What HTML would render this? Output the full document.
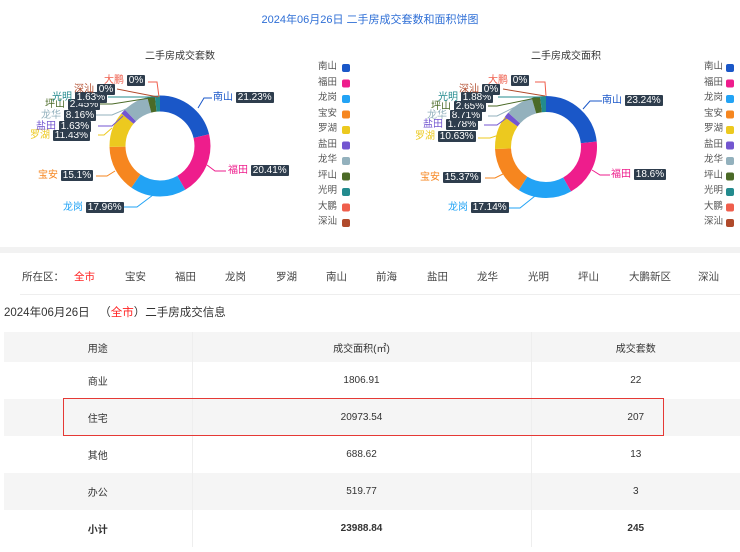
<!DOCTYPE html>
<html><head><meta charset="utf-8"><style>
*{margin:0;padding:0;box-sizing:border-box}
body{width:740px;height:552px;background:#fff;font-family:"Liberation Sans","Noto Sans CJK SC",sans-serif;position:relative;overflow:hidden;color:#333}
.a{position:absolute;white-space:nowrap}
.t{font-size:11px;color:#2f6fd6;left:0;width:740px;text-align:center;top:11px}
.ct{font-size:10px;color:#333}
.lb{font-size:10px;line-height:12px}
.bx{background:#2e3d4d;color:#fff;font-size:10px;line-height:12px;padding:0 2px;border-radius:1px}
.nav{font-size:10.5px;color:#444;top:269px}
table{position:absolute;left:4px;top:332px;width:736px;border-collapse:collapse;font-size:10px;color:#333}
td{height:37px;text-align:center;border-right:1px solid #eee}
td:last-child{border-right:none}
tr.g td{background:#f5f5f5}
</style></head><body>
<div class="a t">2024年06月26日 二手房成交套数和面积饼图</div>
<div class="a ct" style="left:145px;top:47px">二手房成交套数</div>
<div class="a ct" style="left:531px;top:47px">二手房成交面积</div>

<svg class="a" style="left:0;top:0" width="740" height="250">
<g transform="translate(160,146) rotate(-90)" fill="none" stroke-width="16">
<circle r="42.5" pathLength="100" stroke="#1a57c8" stroke-dasharray="21.23 100"/>
<circle r="42.5" pathLength="100" stroke="#ee1d8c" stroke-dasharray="20.41 100" stroke-dashoffset="-21.23"/>
<circle r="42.5" pathLength="100" stroke="#22a3f5" stroke-dasharray="17.96 100" stroke-dashoffset="-41.64"/>
<circle r="42.5" pathLength="100" stroke="#f6861f" stroke-dasharray="15.1 100" stroke-dashoffset="-59.6"/>
<circle r="42.5" pathLength="100" stroke="#ecc91f" stroke-dasharray="11.43 100" stroke-dashoffset="-74.7"/>
<circle r="42.5" pathLength="100" stroke="#7356d0" stroke-dasharray="1.63 100" stroke-dashoffset="-86.13"/>
<circle r="42.5" pathLength="100" stroke="#93b1bd" stroke-dasharray="8.16 100" stroke-dashoffset="-87.76"/>
<circle r="42.5" pathLength="100" stroke="#4b6a27" stroke-dasharray="2.45 100" stroke-dashoffset="-95.92"/>
<circle r="42.5" pathLength="100" stroke="#238b8e" stroke-dasharray="1.63 100" stroke-dashoffset="-98.37"/>
</g>
<g transform="translate(546,147) rotate(-90)" fill="none" stroke-width="16">
<circle r="43" pathLength="100" stroke="#1a57c8" stroke-dasharray="23.24 100"/>
<circle r="43" pathLength="100" stroke="#ee1d8c" stroke-dasharray="18.6 100" stroke-dashoffset="-23.24"/>
<circle r="43" pathLength="100" stroke="#22a3f5" stroke-dasharray="17.14 100" stroke-dashoffset="-41.84"/>
<circle r="43" pathLength="100" stroke="#f6861f" stroke-dasharray="15.37 100" stroke-dashoffset="-58.98"/>
<circle r="43" pathLength="100" stroke="#ecc91f" stroke-dasharray="10.63 100" stroke-dashoffset="-74.35"/>
<circle r="43" pathLength="100" stroke="#7356d0" stroke-dasharray="1.78 100" stroke-dashoffset="-84.98"/>
<circle r="43" pathLength="100" stroke="#93b1bd" stroke-dasharray="8.71 100" stroke-dashoffset="-86.76"/>
<circle r="43" pathLength="100" stroke="#4b6a27" stroke-dasharray="2.65 100" stroke-dashoffset="-95.47"/>
<circle r="43" pathLength="100" stroke="#238b8e" stroke-dasharray="1.88 100" stroke-dashoffset="-98.12"/>
</g>
<g fill="none" stroke-width="1">
<polyline points="198,108 204,98 212,98" stroke="#1a57c8"/>
<polyline points="207,165 215,171 226,171" stroke="#ee1d8c"/>
<polyline points="153,195 137,207 122,207" stroke="#22a3f5"/>
<polyline points="115,171 107,176 96,176" stroke="#f6861f"/>
<polyline points="112,128 104,135 98,135" stroke="#ecc91f"/>
<polyline points="123,116 112,126 98,126" stroke="#7356d0"/>
<polyline points="140,103 112,115 95,115" stroke="#93b1bd"/>
<polyline points="150,98 112,104 97,104" stroke="#4b6a27"/>
<polyline points="157,97 115,97 108,97" stroke="#238b8e"/>
<polyline points="158,97 117,89" stroke="#b04a2b"/>
<polyline points="159,97 157,82 148,82" stroke="#ef5e4c"/>
<polyline points="583,109 590,101 602,101" stroke="#1a57c8"/>
<polyline points="592,170 600,175 610,175" stroke="#ee1d8c"/>
<polyline points="535,196 520,208 490,208" stroke="#22a3f5"/>
<polyline points="505,173 495,178 485,178" stroke="#f6861f"/>
<polyline points="502,134 490,138 478,138" stroke="#ecc91f"/>
<polyline points="508,117 497,125 484,125" stroke="#7356d0"/>
<polyline points="523,103 497,116 488,116" stroke="#93b1bd"/>
<polyline points="536,98 497,106 488,106" stroke="#4b6a27"/>
<polyline points="543,97 498,97" stroke="#238b8e"/>
<polyline points="545,96 503,89" stroke="#b04a2b"/>
<polyline points="546,96 545,82 535,82" stroke="#ef5e4c"/>
</g>
</svg>

<div class="a lb" style="left:213px;top:92px;color:#1a57c8">南山 <span class="bx">21.23%</span></div>
<div class="a lb" style="left:228px;top:165px;color:#ee1d8c">福田 <span class="bx">20.41%</span></div>
<div class="a lb" style="left:63px;top:202px;color:#22a3f5">龙岗 <span class="bx">17.96%</span></div>
<div class="a lb" style="left:38px;top:170px;color:#f6861f">宝安 <span class="bx">15.1%</span></div>
<div class="a lb" style="left:30px;top:130px;color:#ecc91f">罗湖 <span class="bx">11.43%</span></div>
<div class="a lb" style="left:36px;top:121px;color:#7356d0">盐田 <span class="bx">1.63%</span></div>
<div class="a lb" style="left:41px;top:110px;color:#93b1bd">龙华 <span class="bx">8.16%</span></div>
<div class="a lb" style="left:45px;top:99px;color:#4b6a27">坪山 <span class="bx">2.45%</span></div>
<div class="a lb" style="left:52px;top:92px;color:#238b8e">光明 <span class="bx">1.63%</span></div>
<div class="a lb" style="left:74px;top:84px;color:#b04a2b">深汕 <span class="bx">0%</span></div>
<div class="a lb" style="left:104px;top:75px;color:#ef5e4c">大鹏 <span class="bx">0%</span></div>

<div class="a lb" style="left:602px;top:95px;color:#1a57c8">南山 <span class="bx">23.24%</span></div>
<div class="a lb" style="left:611px;top:169px;color:#ee1d8c">福田 <span class="bx">18.6%</span></div>
<div class="a lb" style="left:448px;top:202px;color:#22a3f5">龙岗 <span class="bx">17.14%</span></div>
<div class="a lb" style="left:420px;top:172px;color:#f6861f">宝安 <span class="bx">15.37%</span></div>
<div class="a lb" style="left:415px;top:131px;color:#ecc91f">罗湖 <span class="bx">10.63%</span></div>
<div class="a lb" style="left:423px;top:119px;color:#7356d0">盐田 <span class="bx">1.78%</span></div>
<div class="a lb" style="left:427px;top:110px;color:#93b1bd">龙华 <span class="bx">8.71%</span></div>
<div class="a lb" style="left:431px;top:101px;color:#4b6a27">坪山 <span class="bx">2.65%</span></div>
<div class="a lb" style="left:438px;top:92px;color:#238b8e">光明 <span class="bx">1.88%</span></div>
<div class="a lb" style="left:459px;top:84px;color:#b04a2b">深汕 <span class="bx">0%</span></div>
<div class="a lb" style="left:488px;top:75px;color:#ef5e4c">大鹏 <span class="bx">0%</span></div>

<div class="a" style="left:318px;top:59px;font-size:9.5px;color:#555;line-height:15.5px">南山<br>福田<br>龙岗<br>宝安<br>罗湖<br>盐田<br>龙华<br>坪山<br>光明<br>大鹏<br>深汕</div>
<div class="a" style="left:704px;top:59px;font-size:9.5px;color:#555;line-height:15.5px">南山<br>福田<br>龙岗<br>宝安<br>罗湖<br>盐田<br>龙华<br>坪山<br>光明<br>大鹏<br>深汕</div>
<svg class="a" style="left:0;top:0" width="740" height="250">
<g id="sqs">
<rect x="342" y="64" width="8" height="8" rx="2" fill="#1a57c8"/>
<rect x="342" y="79.5" width="8" height="8" rx="2" fill="#ee1d8c"/>
<rect x="342" y="95" width="8" height="8" rx="2" fill="#22a3f5"/>
<rect x="342" y="110.5" width="8" height="8" rx="2" fill="#f6861f"/>
<rect x="342" y="126" width="8" height="8" rx="2" fill="#ecc91f"/>
<rect x="342" y="141.5" width="8" height="8" rx="2" fill="#7356d0"/>
<rect x="342" y="157" width="8" height="8" rx="2" fill="#93b1bd"/>
<rect x="342" y="172.5" width="8" height="8" rx="2" fill="#4b6a27"/>
<rect x="342" y="188" width="8" height="8" rx="2" fill="#238b8e"/>
<rect x="342" y="203.5" width="8" height="8" rx="2" fill="#ef5e4c"/>
<rect x="342" y="219" width="8" height="8" rx="2" fill="#b04a2b"/>
</g>
<use href="#sqs" x="384"/>
</svg>

<div class="a" style="left:0;top:247px;width:740px;height:6px;background:#f2f2f2"></div>

<div class="a nav" style="left:22px">所在区：</div>
<div class="a nav" style="left:74px;color:#f22">全市</div>
<div class="a nav" style="left:125px">宝安</div>
<div class="a nav" style="left:175px">福田</div>
<div class="a nav" style="left:225px">龙岗</div>
<div class="a nav" style="left:276px">罗湖</div>
<div class="a nav" style="left:326px">南山</div>
<div class="a nav" style="left:376px">前海</div>
<div class="a nav" style="left:427px">盐田</div>
<div class="a nav" style="left:477px">龙华</div>
<div class="a nav" style="left:528px">光明</div>
<div class="a nav" style="left:578px">坪山</div>
<div class="a nav" style="left:629px">大鹏新区</div>
<div class="a nav" style="left:698px">深汕</div>
<div class="a" style="left:20px;top:294px;width:720px;height:1px;background:#eee"></div>

<div class="a" style="left:4px;top:304px;font-size:11.5px;color:#333">2024年06月26日 &nbsp;&nbsp;（<span style="color:#f22">全市</span>）二手房成交信息</div>

<table>
<tr class="g"><td style="width:188px;height:30px">用途</td><td style="width:339px;height:30px">成交面积(㎡)</td><td style="height:30px">成交套数</td></tr>
<tr><td>商业</td><td>1806.91</td><td>22</td></tr>
<tr class="g"><td>住宅</td><td>20973.54</td><td>207</td></tr>
<tr><td>其他</td><td>688.62</td><td>13</td></tr>
<tr class="g"><td>办公</td><td>519.77</td><td>3</td></tr>
<tr><td style="font-weight:bold">小计</td><td style="font-weight:bold">23988.84</td><td style="font-weight:bold">245</td></tr>
</table>
<div class="a" style="left:63px;top:398px;width:601px;height:38px;border:1.5px solid #e53935"></div>
</body></html>
